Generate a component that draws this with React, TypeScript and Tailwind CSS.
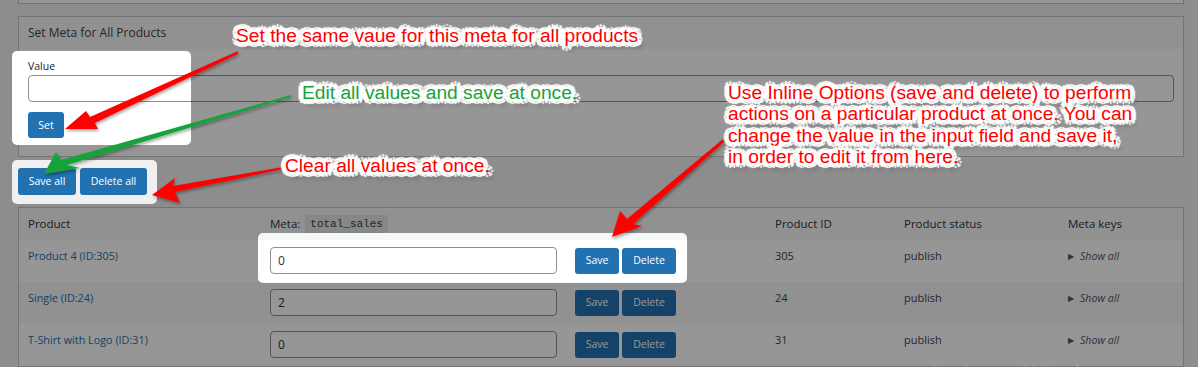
import React from "react";

function rr(x: number, y: number, w: number, h: number, r: number) {
  return `M${x + r} ${y}H${x + w - r}A${r} ${r} 0 0 1 ${x + w} ${y + r}V${y + h - r}A${r} ${r} 0 0 1 ${x + w - r} ${y + h}H${x + r}A${r} ${r} 0 0 1 ${x} ${y + h - r}V${y + r}A${r} ${r} 0 0 1 ${x + r} ${y}Z`;
}

const holes: [number, number, number, number][] = [
  [12, 51, 179, 94],
  [12, 160, 145, 44],
  [258, 233, 429, 50],
];

const dimPath = "M0 0H1198V367H0Z" + holes.map(([x, y, w, h]) => rr(x, y, w, h, 5)).join("");

const rows = [
  { name: "Product 4 (ID:305)", value: "0", id: "305" },
  { name: "Single (ID:24)", value: "2", id: "24" },
  { name: "T-Shirt with Logo (ID:31)", value: "0", id: "31" },
];

const sticker =
  "font-['Liberation_Sans',Arial,sans-serif] text-[19.2px] leading-[21.3px] whitespace-nowrap [text-shadow:5px_0_1px_#fff,-5px_0_1px_#fff,0_5px_1px_#fff,0_-5px_1px_#fff,4px_3px_1px_#fff,-4px_3px_1px_#fff,4px_-3px_1px_#fff,-4px_-3px_1px_#fff,3px_4px_1px_#fff,-3px_4px_1px_#fff,3px_-4px_1px_#fff,-3px_-4px_1px_#fff,2px_2px_0_#fff,-2px_-2px_0_#fff,2px_-2px_0_#fff,-2px_2px_0_#fff,4px_6px_4px_rgba(0,0,0,0.35)]";

export default function App() {
  return (
    <div className="relative w-[1198px] h-[367px] overflow-hidden bg-[#f0f0f1] font-['Open_Sans',sans-serif] text-[11.5px] text-[#3c434a]">
      <div className="pl-[18px] pr-[14px]">
        <div className="h-[4px] border-x border-b border-[#c3c4c7] bg-white" />

        <section className="mt-[12px] border border-[#c3c4c7] bg-white">
          <div className="h-[32px] px-[9px] flex items-center bg-[#f6f7f7] text-[12px] text-[#3c434a]">
            Set Meta for All Products
          </div>
          <div className="px-[9px] pt-[9px] pb-[18px]">
            <div className="h-[17px] leading-[17px] text-[10.5px] text-[#1d2327]">Value</div>
            <input
              readOnly
              className="block w-full h-[27px] rounded-[4px] border border-[#8c8f94] bg-white outline-none"
            />
            <button className="mt-[10px] h-[26px] w-[36px] rounded-[3px] bg-[#2271b1] text-white text-[10.5px] leading-[26px]">
              Set
            </button>
          </div>
        </section>

        <div className="mt-[11px] flex gap-[4px]">
          <button className="h-[27px] w-[58px] rounded-[3px] bg-[#2271b1] text-white text-[10.5px]">Save all</button>
          <button className="h-[27px] w-[67px] rounded-[3px] bg-[#2271b1] text-white text-[10.5px]">Delete all</button>
        </div>

        <div className="mt-[12px] border border-[#c3c4c7] bg-white">
          <div className="grid grid-cols-[241px_505px_129px_164px_1fr] h-[32px] items-center bg-[#f6f7f7] text-[#2c3338]">
            <div className="pl-[9px]">Product</div>
            <div className="pl-[10px] flex items-center">
              <span>Meta:</span>
              <code className="ml-[5px] px-[5px] h-[18px] leading-[18px] bg-black/[0.07] font-['Liberation_Mono',monospace] text-[11px] text-[#3c434a]">
                total_sales
              </code>
            </div>
            <div className="pl-[10px]">Product ID</div>
            <div className="pl-[10px]">Product status</div>
            <div className="pl-[10px]">Meta keys</div>
          </div>
          {rows.map((r, i) => (
            <div
              key={r.id}
              className={`grid grid-cols-[241px_505px_129px_164px_1fr] items-start pt-[7px] pb-[8px] ${
                i % 2 === 1 ? "bg-[#f6f7f7]" : "bg-white"
              }`}
            >
              <div className="pl-[9px] pt-[1px] leading-[16px] text-[10.8px] text-[#2271b1]">{r.name}</div>
              <div className="pl-[10px] flex items-center">
                <input
                  readOnly
                  value={r.value}
                  className="w-[287px] h-[27px] rounded-[4px] border border-[#8c8f94] bg-white px-[7px] text-[12px] text-[#2c3338] outline-none"
                />
                <button className="ml-[18px] h-[26px] w-[44px] rounded-[3px] bg-[#2271b1] text-white text-[10.5px]">Save</button>
                <button className="ml-[3px] h-[26px] w-[54px] rounded-[3px] bg-[#2271b1] text-white text-[10.5px]">Delete</button>
              </div>
              <div className="pl-[10px] pt-[1px] leading-[16px] text-[11px]">{r.id}</div>
              <div className="pl-[10px] pt-[1px] leading-[16px] text-[11px]">publish</div>
              <div className="pl-[10px] pt-[1px] leading-[16px] flex items-center text-[#50575e]">
                <span className="text-[8px]">▶</span>
                <span className="ml-[6px] italic text-[10.6px]">Show all</span>
              </div>
            </div>
          ))}
        </div>
      </div>

      <svg className="absolute inset-0 pointer-events-none" width="1198" height="367" viewBox="0 0 1198 367">
        <defs>
          <filter id="ash" x="-20%" y="-20%" width="140%" height="140%">
            <feDropShadow dx="1" dy="2" stdDeviation="1.5" floodColor="#000" floodOpacity="0.35" />
          </filter>
        </defs>
        <rect x="12" y="51" width="14" height="94" rx="5" fill="#fff" />
        <path d={dimPath} fill="#000" fillOpacity="0.41" fillRule="evenodd" />
        <g filter="url(#ash)">
          <polygon points="238,51 90,117 86,111 65,129 98,129 95,123 238,54" fill="#ff0000" />
          <polygon points="291,95 61,160 56,152 44,174 80,168 67,165 291,97" fill="#16a33a" />
          <polygon points="283,167 173,186 175,178 152,195 180,203 175,192 283,169" fill="#ff0000" />
          <polygon points="723,139 627,219 620,211 612,237 642,226 633,224 724,142" fill="#ff0000" />
        </g>
      </svg>

      <div className={`absolute left-[236px] top-[25px] text-[#ff0000] ${sticker}`}>
        Set the same vaue for this meta for all products
      </div>
      <div className={`absolute left-[302px] top-[82px] text-[#16a33a] ${sticker}`}>
        Edit all values and save at once.
      </div>
      <div className={`absolute left-[285px] top-[155px] text-[#ff0000] ${sticker}`}>
        Clear all values at once.
      </div>
      <div className={`absolute left-[728px] top-[82px] text-[#ff0000] ${sticker}`}>
        Use Inline Options (save and delete) to perform
        <br />
        actions on a particular product at once. You can
        <br />
        change the value in the input field and save it,
        <br />
        in order to edit it from here.
      </div>

      <div className="absolute left-[928px] top-[356px] font-['Open_Sans',sans-serif] text-[24px] text-white/20 whitespace-nowrap">
        Activate Windows
      </div>
    </div>
  );
}
